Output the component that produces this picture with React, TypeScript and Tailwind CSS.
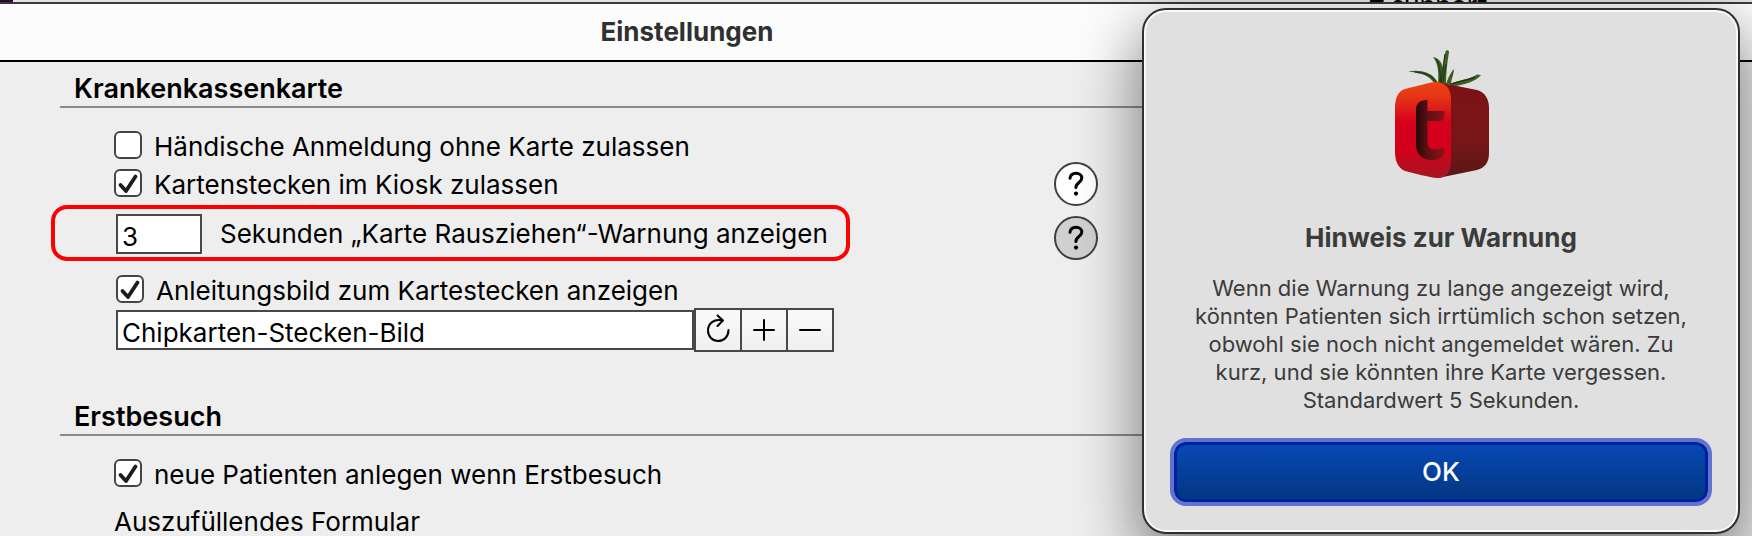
import React, { useId, useState } from "react";
import type { ReactNode } from "react";

function Tick() {
  return (
    <svg viewBox="0 0 24 24" className="pointer-events-none absolute inset-0.5 size-6 opacity-0 peer-checked:opacity-100" aria-hidden="true">
      <path d="M4.5 14 L10 20 L19.5 5.5" fill="none" stroke="#1c1c1c" strokeWidth="3.8" strokeLinecap="round" strokeLinejoin="round" />
    </svg>
  );
}

function CheckRow({ label, checked = false }: { label: string; checked?: boolean }) {
  const id = useId();
  return (
    <div className="flex h-[38px] items-center gap-3">
      <span className="relative size-7 shrink-0">
        <input
          id={id}
          type="checkbox"
          defaultChecked={checked}
          className="peer block size-7 appearance-none rounded-md border-2 border-[#454545] bg-white"
        />
        <Tick />
      </span>
      <label htmlFor={id} className="pt-1">{label}</label>
    </div>
  );
}

function SectionTitle({ children }: { children: ReactNode }) {
  return (
    <h2 className="mr-10 ml-[60px] border-b-2 border-[#8a8a8a] pb-px pl-3.5 text-[27px] leading-8 font-semibold">
      {children}
    </h2>
  );
}

function HelpButton({ active = false }: { active?: boolean }) {
  return (
    <button
      type="button"
      aria-label="Hilfe"
      className={
        active
          ? "grid size-11 place-items-center rounded-full border-2 border-[#404040] bg-[#d0d0d0]"
          : "grid size-11 place-items-center rounded-full border-2 border-[#404040] bg-white"
      }
    >
      <svg viewBox="0 0 24 30" className="h-[30px] w-6" aria-hidden="true">
        <path d="M6 9.2C6.500 5.800 9 4.200 12 4.200C15.400 4.200 17.800 6.300 17.800 9.100C17.800 13.600 11.900 13.400 11.900 18.500" fill="none" stroke="#000" strokeWidth="3" strokeLinecap="round" />
        <circle cx="12" cy="24.600" r="2.100" fill="#000" />
      </svg>
    </button>
  );
}

function ToolButton({ label, children }: { label: string; children: ReactNode }) {
  return (
    <button type="button" aria-label={label} className="grid h-10 w-[46px] place-items-center border-r-2 border-[#484848] bg-linear-to-b from-[#fafafa] to-[#f0f0f0] last:w-11 last:border-r-0">
      <svg viewBox="0 0 32 32" className="size-8" fill="none" stroke="#000" strokeWidth="2" strokeLinecap="round" strokeLinejoin="round" aria-hidden="true">
        {children}
      </svg>
    </button>
  );
}

function TomatoLogo() {
  return (
    <svg viewBox="0 0 140 150" className="h-[150px] w-[140px]" aria-hidden="true">
      <defs>
        <linearGradient id="front" x1="0" y1="0" x2="0" y2="1">
          <stop offset="0" stopColor="#ec4313" />
          <stop offset="0.150" stopColor="#e53515" />
          <stop offset="0.420" stopColor="#d7001b" />
          <stop offset="0.700" stopColor="#d3001c" />
          <stop offset="1" stopColor="#a51620" />
        </linearGradient>
        <linearGradient id="side" x1="0" y1="0" x2="0" y2="1">
          <stop offset="0" stopColor="#7b1216" />
          <stop offset="0.600" stopColor="#781619" />
          <stop offset="1" stopColor="#561816" />
        </linearGradient>
        <linearGradient id="letter" x1="0" y1="0" x2="1" y2="0">
          <stop offset="0" stopColor="#260808" />
          <stop offset="0.400" stopColor="#5c1013" />
          <stop offset="1" stopColor="#8b1218" />
        </linearGradient>
      </defs>
      <g fill="#3f5e20">
        <path d="M64 44C57 34 49 33 37 31.500C48 29.500 60 32 65 40L68 44Z" />
        <path d="M67 44C68 32 67 23 62 17C68 18 71 23 72 28L74.500 11C76 9.500 78 10 78 12C76 24 75 34 75 44Z" />
        <path d="M75 44C78 36 80 32 83 29C83 34 80 40 80 44Z" />
        <path d="M77 45C90 39 98 40 106 34.500L110 35C104 42 94 44 85 46Z" />
      </g>
      <path d="M70 43L74 14M65 19C69 25 70 32 69 43M72 42L75 24M80 44L104 37.500M66 43C61 35 54 33 44 32" stroke="#203b1b" strokeWidth="1.300" fill="none" />
      <path d="M66 42L106 50C114 52 118 59 118 68V113C118 122 114 128 106 130L67 138Z" fill="url(#side)" />
      <path d="M34 49L60 42.600C72 40 80 47 80 59V121C80 132 76 138 66 138C61 138 38 132 34 131C27 128 24 121 24 112V69C24 58 27 51 34 49Z" fill="url(#front)" />
      <path d="M45 70C45 63 49 60 56.500 60V71H73.500V75C73.500 79 71.500 81 67.500 81H56.500V102C56.500 109 62 110 66 109.500C69 109 71 108.500 73 107.500V112C73 117 69 119.500 62 120C52 120.500 45 115 45 104Z" fill="url(#letter)" />
    </svg>
  );
}

function WarningDialog() {
  return (
    <div role="dialog" aria-labelledby="dlg-title" className="absolute top-2 right-3 flex w-[598px] flex-col items-center rounded-[24px] border-2 border-[#303030] bg-[#e0e0e0] px-[26px] pt-[30px] pb-[26px] text-[#3b3b3b] shadow-[inset_0_0_0_2px_#fafafa,0_24px_60px_6px_rgba(0,0,0,0.45)]">
      <TomatoLogo />
      <h2 id="dlg-title" className="mt-8 text-[26px] leading-8 font-bold">Hinweis zur Warnung</h2>
      <p className="mt-5 w-[510px] text-center text-[22px] leading-7">
        Wenn die Warnung zu lange angezeigt wird, könnten Patienten sich irrtümlich schon setzen, obwohl sie noch nicht angemeldet wären. Zu kurz, und sie könnten ihre Karte vergessen. Standardwert 5 Sekunden.
      </p>
      <button type="button" className="mt-6 h-[68px] w-full rounded-2xl border-4 border-[#6074cf] bg-linear-to-b from-[#0849b8] to-[#033680] bg-clip-padding text-[26px] font-medium text-white shadow-[inset_0_0_0_3px_#0020a0]">
        OK
      </button>
    </div>
  );
}

export default function App() {
  const [seconds, setSeconds] = useState("3");
  const [image, setImage] = useState("Chipkarten-Stecken-Bild");
  return (
    <div className="relative h-screen overflow-hidden bg-[#eeeeee] font-['Inter','Liberation_Sans',sans-serif] text-[26px] leading-[30px] text-black">
      <div className="flex h-0.5 justify-between overflow-hidden bg-[#e2e4e7] pr-[265px]">
        <span className="w-[13px] bg-[#2b0a2e]" />
        <span className="-mt-2.5 font-['Lato',sans-serif] text-[28px] leading-7 whitespace-pre"># support</span>
      </div>
      <header className="h-[60px] border-t-2 border-b-2 border-t-[#3a3a3c] border-b-black bg-[#fcfcfc] pr-[378px] text-center">
        <h1 className="pt-3 text-[26px] leading-8 font-bold text-[#303030]">Einstellungen</h1>
      </header>
      <main className="pt-[11px]">
        <section>
          <SectionTitle>Krankenkassenkarte</SectionTitle>
          <div className="flex pt-[18px]">
            <div className="w-[850px] shrink-0">
              <div className="pl-[114px]">
                <CheckRow label="Händische Anmeldung ohne Karte zulassen" />
                <CheckRow label="Kartenstecken im Kiosk zulassen" checked />
              </div>
              <div className="mt-[3px] ml-[51px] flex h-14 items-center rounded-2xl border-4 border-[#ff0000] pt-0.5 pl-[61px]">
                <input
                  id="seconds"
                  value={seconds}
                  onChange={(e) => setSeconds(e.target.value)}
                  className="h-10 w-[86px] border-2 border-[#484848] bg-white pt-1 pl-1"
                />
                <label htmlFor="seconds" className="pl-[18px] whitespace-nowrap">Sekunden „Karte Rausziehen“-Warnung anzeigen</label>
              </div>
              <div className="mt-[9px] pl-[116px]">
                <CheckRow label="Anleitungsbild zum Kartestecken anzeigen" checked />
                <div className="flex items-center">
                  <input
                    aria-label="Anleitungsbild"
                    value={image}
                    onChange={(e) => setImage(e.target.value)}
                    className="h-10 w-[578px] border-2 border-[#484848] bg-white pt-1 pl-1"
                  />
                  <div className="flex h-11 border-2 border-[#484848]">
                    <ToolButton label="Neu laden">
                      <path d="M20 6.300C12 4.500 6 9.500 6 16.500C6 22.500 10.500 27 16 27C22 27 26.500 22.500 26.500 16M15.500 1.500L21 6.500L15.500 12" />
                    </ToolButton>
                    <ToolButton label="Hinzufügen">
                      <path d="M16 6V26M6 16H26" />
                    </ToolButton>
                    <ToolButton label="Entfernen">
                      <path d="M6 16H26" />
                    </ToolButton>
                  </div>
                </div>
              </div>
            </div>
            <div className="flex flex-col gap-2.5 pt-9 pl-[204px]">
              <HelpButton />
              <HelpButton active />
            </div>
          </div>
        </section>
        <section className="pt-[49px]">
          <SectionTitle>Erstbesuch</SectionTitle>
          <div className="pt-[18px] pl-[114px]">
            <CheckRow label="neue Patienten anlegen wenn Erstbesuch" checked />
            <p className="pt-4 leading-7">Auszufüllendes Formular</p>
          </div>
        </section>
      </main>
      <WarningDialog />
    </div>
  );
}
